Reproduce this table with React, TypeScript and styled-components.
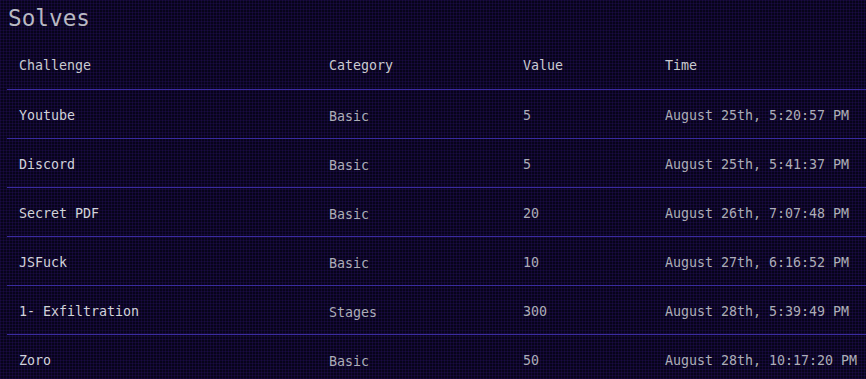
import styled, { createGlobalStyle } from 'styled-components';

type Solve = {
  challenge: string;
  category: string;
  value: number;
  time: string;
};

const solves: Solve[] = [
  { challenge: 'Youtube', category: 'Basic', value: 5, time: 'August 25th, 5:20:57 PM' },
  { challenge: 'Discord', category: 'Basic', value: 5, time: 'August 25th, 5:41:37 PM' },
  { challenge: 'Secret PDF', category: 'Basic', value: 20, time: 'August 26th, 7:07:48 PM' },
  { challenge: 'JSFuck', category: 'Basic', value: 10, time: 'August 27th, 6:16:52 PM' },
  { challenge: '1- Exfiltration', category: 'Stages', value: 300, time: 'August 28th, 5:39:49 PM' },
  { challenge: 'Zoro', category: 'Basic', value: 50, time: 'August 28th, 10:17:20 PM' },
];

const App = () => {
  return (
    <>
      <GlobalStyle />
      <Page>
        <Title>Solves</Title>
        <Table>
          <colgroup>
            <col style={{ width: 310 }} />
            <col style={{ width: 194 }} />
            <col style={{ width: 142 }} />
            <col />
          </colgroup>
          <thead>
            <tr>
              <Th>Challenge</Th>
              <Th>Category</Th>
              <Th>Value</Th>
              <Th>Time</Th>
            </tr>
          </thead>
          <tbody>
            {solves.map((s) => (
              <tr key={s.challenge}>
                <Td>{s.challenge}</Td>
                <Td $dim $shift>
                  {s.category}
                </Td>
                <Td $dim>{s.value}</Td>
                <Td $dim>{s.time}</Td>
              </tr>
            ))}
          </tbody>
        </Table>
      </Page>
    </>
  );
};

const GlobalStyle = createGlobalStyle`
  html, body {
    margin: 0;
    background-color: #07041a;
  }
  body {
    font-family: "DejaVu Sans Mono", "Liberation Mono", monospace;
  }
`;

const Page = styled.div`
  width: 866px;
  height: 379px;
  overflow: hidden;
  background-color: #07041a;
  background-image:
    linear-gradient(rgba(60, 25, 140, 0.2) 1px, transparent 1px),
    linear-gradient(90deg, rgba(60, 25, 140, 0.2) 1px, transparent 1px);
  background-size: 3px 3px;
  padding: 4px 0 0 7px;
  box-sizing: border-box;
`;

const Title = styled.h2`
  margin: 0 0 0 1px;
  font-size: 22.7px;
  font-weight: normal;
  line-height: 28px;
  color: #b9b9c2;
`;

const Table = styled.table`
  width: 859px;
  border-collapse: collapse;
  table-layout: fixed;
  margin-top: 9px;
`;

const Th = styled.th`
  height: 47px;
  padding: 1px 12px 0;
  text-align: left;
  font-weight: normal;
  font-size: 13.3px;
  color: #cacad2;
  vertical-align: middle;
  white-space: nowrap;
`;

const Td = styled.td<{ $dim?: boolean; $shift?: boolean }>`
  height: 46px;
  padding: 2px 12px 0;
  border-top: 1px solid #3a2ca0;
  font-size: 13.3px;
  color: ${(p) => (p.$dim ? '#adadb8' : '#d2d2da')};
  vertical-align: middle;
  white-space: nowrap;
  position: relative;
  top: ${(p) => (p.$shift ? '1px' : '0')};
`;

export default App;
